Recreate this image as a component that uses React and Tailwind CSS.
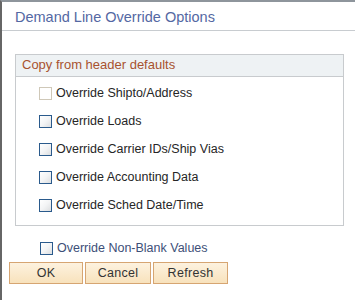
const options = [
  { label: 'Override Shipto/Address', disabled: true },
  { label: 'Override Loads' },
  { label: 'Override Carrier IDs/Ship Vias' },
  { label: 'Override Accounting Data' },
  { label: 'Override Sched Date/Time' },
];

const Box = ({ disabled }) => (
  <span
    className={
      disabled
        ? 'block w-[13px] h-[13px] shrink-0 border border-[#cfc8b8] bg-white'
        : 'block w-[13px] h-[13px] shrink-0 border border-[#2a5a8c] bg-linear-to-br from-white via-[#f3f4f5] to-[#dcdee0]'
    }
  />
);

const Btn = ({ children, w }) => (
  <button
    type="button"
    className={`${w} h-[22px] border border-[#d6a572] bg-linear-to-b from-[#fdf2df] to-[#f8e2bc] text-[12.5px] tracking-[0.3px] text-[#333] leading-none`}
  >
    {children}
  </button>
);

const App = () => {
  return (
    <div
      className="w-[355px] h-[300px] overflow-hidden bg-white border-l-2 border-t-2 border-l-[#666] border-t-[#8e959c] flex flex-col"
      style={{ fontFamily: '"Liberation Sans", Arial, sans-serif' }}
    >
      <div className="h-[29px] shrink-0 border-b border-[#c8ccd0] pl-[13px] pt-[2px] flex items-center">
        <span className="text-[14.5px] leading-[17px] text-[#5468a3]">Demand Line Override Options</span>
      </div>

      <div className="mt-[23px] ml-[13px] w-[329px] h-[172px] shrink-0 border border-[#c8cbce] flex flex-col">
        <div className="h-[22px] shrink-0 bg-[#eef2f4] border-b border-[#c8cbce] pl-[6px] flex items-center">
          <span className="text-[13px] leading-[15px] text-[#a8522f] -mt-[2px]">Copy from header defaults</span>
        </div>
        <div className="pt-[2px] pl-[23px] flex flex-col">
          {options.map((o) => (
            <div key={o.label} className="h-[28px] flex items-center gap-[4px]">
              <Box disabled={o.disabled} />
              <span className="text-[12.5px] leading-[15px] text-[#262626]">{o.label}</span>
            </div>
          ))}
        </div>
      </div>

      <div className="mt-[8px] h-[28px] shrink-0 pl-[38px] flex items-center gap-[4px]">
        <Box />
        <span className="text-[12.5px] leading-[15px] text-[#3d4f78]">Override Non-Blank Values</span>
      </div>

      <div className="pl-[7px] flex gap-[2px]">
        <Btn w="w-[74px]">OK</Btn>
        <Btn w="w-[66px]">Cancel</Btn>
        <Btn w="w-[75px]">Refresh</Btn>
      </div>
    </div>
  );
};

export default App;
